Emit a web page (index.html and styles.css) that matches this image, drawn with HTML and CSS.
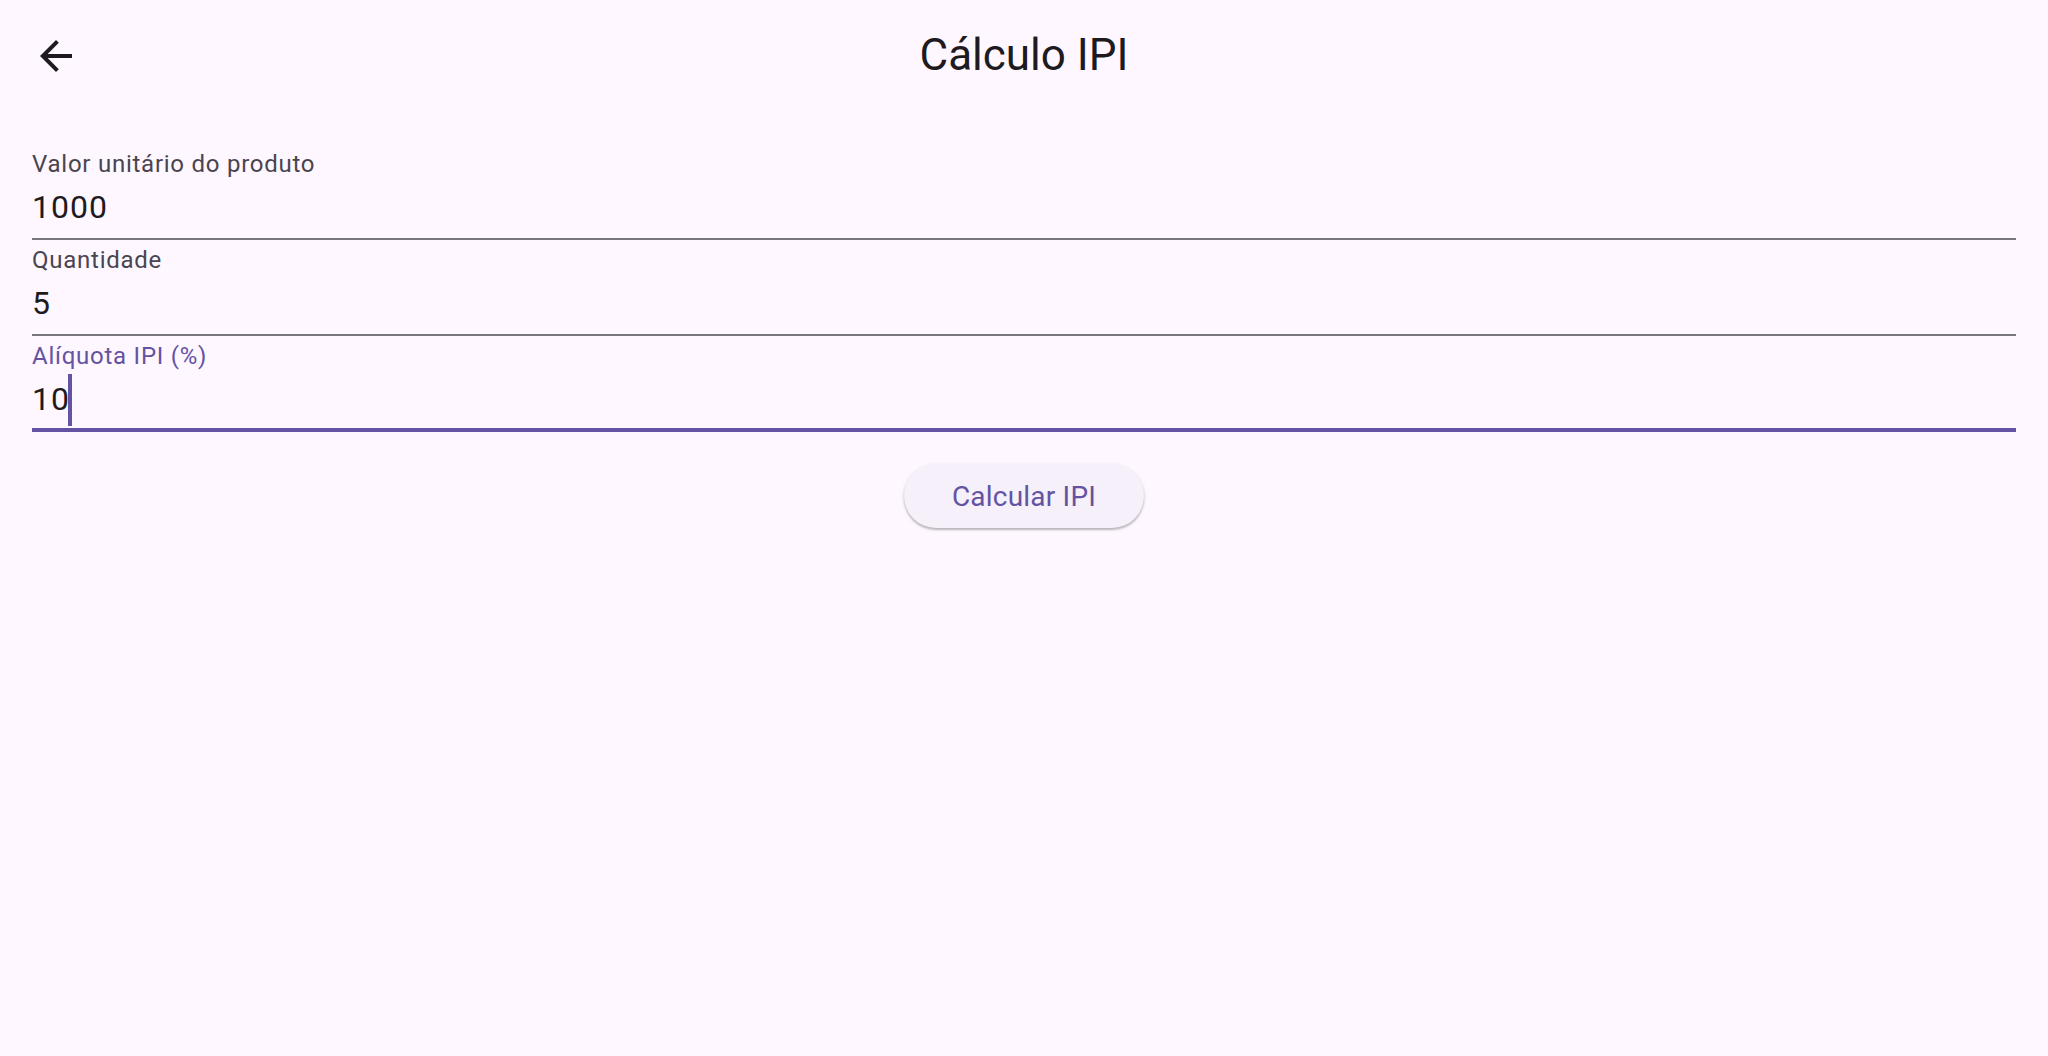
FILE: index.html
```html
<!DOCTYPE html>
<html lang="pt">
<head>
<meta charset="utf-8">
<title>Cálculo IPI</title>
<link rel="stylesheet" href="styles.css">
</head>
<body>
<div class="app">
  <header class="appbar">
    <button class="back" aria-label="Voltar">
      <svg viewBox="0 0 24 24" width="48" height="48"><path d="M20 11H7.83l5.59-5.59L12 4l-8 8 8 8 1.41-1.41L7.83 13H20v-2z" fill="currentColor"/></svg>
    </button>
    <h1 class="title">Cálculo IPI</h1>
  </header>
  <main class="body">
    <div class="field">
      <div class="label">Valor unitário do produto</div>
      <div class="value">1000</div>
    </div>
    <div class="field">
      <div class="label">Quantidade</div>
      <div class="value">5</div>
    </div>
    <div class="field focused">
      <div class="label">Alíquota IPI (%)</div>
      <div class="value">10<span class="caret"></span></div>
    </div>
    <div class="actions">
      <button class="btn">Calcular IPI</button>
    </div>
  </main>
</div>
</body>
</html>
```
FILE: styles.css
```css
html, body {
  margin: 0;
  padding: 0;
  background: #fef7ff;
}
body {
  font-family: Roboto, "Liberation Sans", sans-serif;
  color: #1d1b20;
  width: 2048px;
  height: 1056px;
  overflow: hidden;
}
.appbar {
  position: relative;
  height: 112px;
  display: flex;
  align-items: center;
  justify-content: center;
}
.back {
  position: absolute;
  left: 32px;
  top: 32px;
  width: 48px;
  height: 48px;
  padding: 0;
  border: 0;
  background: none;
  color: #1d1b20;
  display: flex;
}
.title {
  margin: 0 0 3px 0;
  font-size: 44px;
  line-height: 52px;
  font-weight: 400;
  letter-spacing: 0;
  color: #1d1b20;
}
.body {
  padding: 32px 32px 0 32px;
  display: flex;
  flex-direction: column;
}
.field {
  height: 96px;
  box-sizing: border-box;
  padding-top: 8px;
  border-bottom: 2px solid #79767d;
  display: flex;
  flex-direction: column;
}
.field.focused {
  border-bottom: 4px solid #6453a2;
}
.label {
  font-size: 24px;
  line-height: 24px;
  letter-spacing: 0.75px;
  color: #49454f;
}
.focused .label {
  color: #6453a2;
}
.value {
  position: relative;
  margin-top: 15px;
  font-size: 32px;
  line-height: 32px;
  letter-spacing: 1px;
  color: #1d1b20;
}
.caret {
  position: absolute;
  left: 36px;
  top: -9px;
  width: 4px;
  height: 52px;
  background: #6453a2;
}
.actions {
  display: flex;
  justify-content: center;
  margin-top: 32px;
}
.btn {
  height: 64px;
  padding: 0 48px;
  border: 0;
  border-radius: 32px;
  background: #f5f0f9;
  color: #6453a2;
  font-family: Roboto, "Liberation Sans", sans-serif;
  font-size: 28px;
  font-weight: 400;
  letter-spacing: 0.2px;
  box-shadow: 0 2px 2px rgba(0,0,0,0.22), 0 1px 4px rgba(0,0,0,0.10);
}
```
